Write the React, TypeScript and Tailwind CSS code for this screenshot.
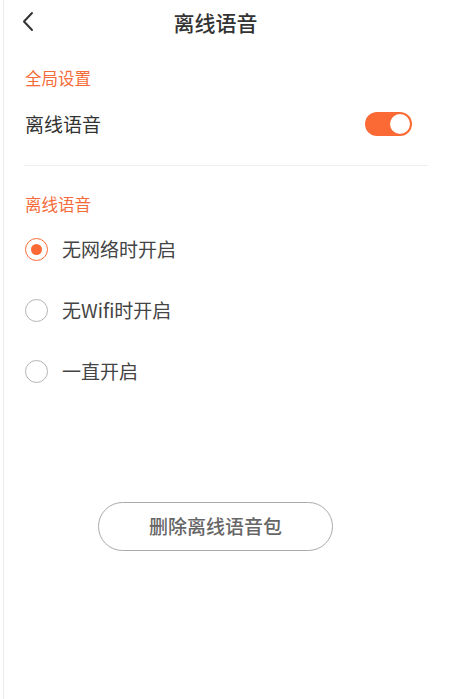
import { useState } from 'react'

const font = { fontFamily: '"Noto Sans CJK SC", "Noto Sans", sans-serif' }

function Toggle({ on, onChange }: { on: boolean; onChange: () => void }) {
  return (
    <button
      onClick={onChange}
      className={`relative w-[47px] h-[24px] rounded-full ${on ? 'bg-[#fb6a35]' : 'bg-[#dcdcdc]'}`}
    >
      <span
        className={`absolute top-[2px] w-[20px] h-[20px] rounded-full bg-white ${on ? 'right-[2px]' : 'left-[2px]'}`}
      />
    </button>
  )
}

function Radio({ checked }: { checked: boolean }) {
  return (
    <span
      className={`flex items-center justify-center w-[23px] h-[23px] rounded-full border-[1.5px] ${
        checked ? 'border-[#fb6a35]' : 'border-[#b4b4b4]'
      }`}
    >
      {checked && <span className="w-[11px] h-[11px] rounded-full bg-[#fb6a35]" />}
    </span>
  )
}

export default function App() {
  const [enabled, setEnabled] = useState(true)
  const [mode, setMode] = useState(0)
  const options = ['无网络时开启', '无Wifi时开启', '一直开启']

  return (
    <div className="min-h-screen bg-white" style={font}>
      <div className="ml-[3px] w-[430px] min-h-screen border-l border-[#ececec] bg-white text-[#333]">
        {/* header */}
        <div className="relative h-[44px] flex items-center justify-center">
          <button className="absolute left-[17px] top-[11px] p-0">
            <svg width="13" height="21" viewBox="0 0 13 21" fill="none">
              <path d="M11 2 L3 10.5 L11 19" stroke="#333" strokeWidth="2" strokeLinecap="round" strokeLinejoin="round" />
            </svg>
          </button>
          <h1 className="text-[21px] leading-[24px] font-medium -ml-[6px]">离线语音</h1>
        </div>

        <div className="mt-[22px] pl-[21px] text-[16.5px] leading-[24px] text-[#f56b3a]">全局设置</div>
        <div className="mt-[6px] h-[56px] px-[21px] flex items-center justify-between">
          <span className="text-[19px]">离线语音</span>
          <Toggle on={enabled} onChange={() => setEnabled(!enabled)} />
        </div>

        <div className="mt-[13px] ml-[20px] w-[404px] h-px bg-[#eeeeee]" />

        <div className="mt-[26px] pl-[21px] text-[16.5px] leading-[24px] text-[#f56b3a]">离线语音</div>
        <div className="mt-[3px]">
          {options.map((o, i) => (
            <div
              key={o}
              onClick={() => setMode(i)}
              className="h-[61px] pl-[21px] flex items-center gap-[14px] cursor-pointer"
            >
              <Radio checked={mode === i} />
              <span className="text-[19px] text-[#444]">{o}</span>
            </div>
          ))}
        </div>

        <button className="mt-[100px] ml-[94px] w-[235px] h-[49px] rounded-full border border-[#aaaaaa] text-[19px] text-[#666] font-medium">
          删除离线语音包
        </button>
      </div>
    </div>
  )
}
